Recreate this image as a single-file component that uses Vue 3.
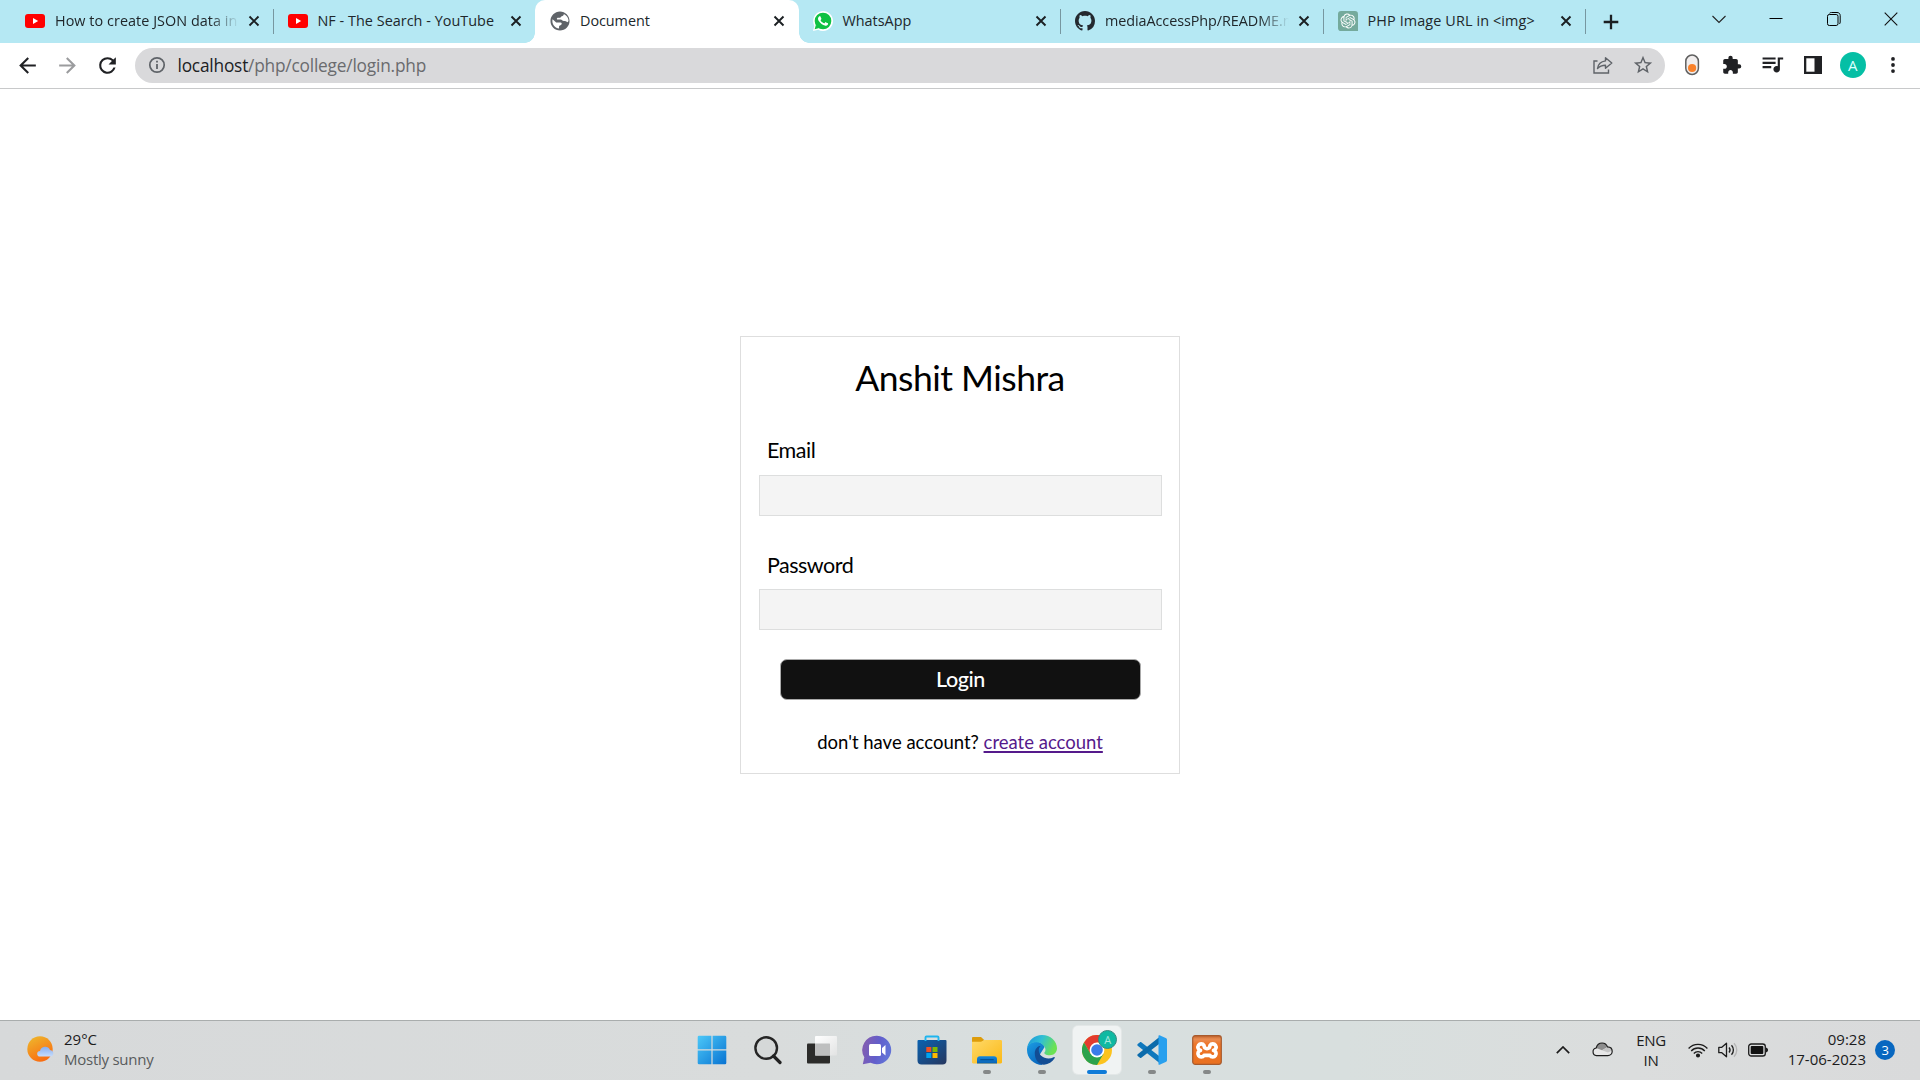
<script setup>
const tabs = [
  { icon: 'youtube', title: 'How to create JSON data in', sp: '0.05px', fade: true },
  { icon: 'youtube', title: 'NF - The Search - YouTube', sp: '0.03px' },
  { icon: 'globe', title: 'Document', active: true, sp: '-0.05px' },
  { icon: 'whatsapp', title: 'WhatsApp', sp: '0px' },
  { icon: 'github', title: 'mediaAccessPhp/README.m', sp: '-0.07px', fade: true },
  { icon: 'openai', title: 'PHP Image URL in <img>', sp: '0.12px' },
]
</script>

<template>
  <div class="screen">
    <header class="strip">
      <div v-for="(t, i) in tabs" :key="i" class="tab" :class="{ active: t.active, sep: i !== 1 && i !== 2 }">
        <svg v-if="t.icon === 'youtube'" class="fav" viewBox="0 0 20 20">
          <rect x="0" y="3" width="20" height="14" rx="3" fill="#f00" />
          <path d="M8 7v6l5.2-3z" fill="#fff" />
        </svg>
        <svg v-else-if="t.icon === 'globe'" class="fav" viewBox="1.5 1.5 21 21">
          <path fill="#5f6368" d="M12 2C6.48 2 2 6.48 2 12s4.48 10 10 10 10-4.48 10-10S17.52 2 12 2zm-1 17.93c-3.95-.49-7-3.85-7-7.93 0-.62.08-1.21.21-1.79L8 13.5h4.5c1.5 0 1.7 1.6.8 2.4-.9.8-2.300.6-2.300 2zM19.900 13.400c-1-.9-2.500-1.400-3.900-1.400-1.700 0-1.800-1.500-3.300-1.500H9.500c-1.100 0-1.100-1.700 0-2h2.500c1.100 0 .8-1.500 2-1.500 1 0 2-.9 2-2v-.41c2.930 1.190 5 4.060 5 7.410z" />
        </svg>
        <svg v-else-if="t.icon === 'whatsapp'" class="fav" viewBox="0 0 24 24">
          <path fill="#fff" d="M0 24l1.700-6.200A11.900 11.900 0 1 1 6.300 22.400z" />
          <circle cx="12" cy="12" r="10" fill="#0fc143" />
          <path fill="#0fc143" d="M2 22l1.500-5.500 4 4z" />
          <path fill="#fff" d="M17.470 14.380c-.3-.15-1.760-.87-2.030-.97-.27-.1-.47-.15-.67.15-.2.3-.77.97-.94 1.160-.17.2-.35.22-.64.080-.3-.15-1.260-.46-2.390-1.480-.88-.79-1.480-1.760-1.650-2.060-.17-.3-.02-.46.13-.6.13-.14.3-.35.45-.52.15-.18.2-.3.3-.5.1-.2.050-.37-.03-.52-.07-.15-.67-1.610-.92-2.210-.24-.58-.49-.5-.67-.51h-.57c-.2 0-.52.070-.79.370-.27.3-1.040 1.020-1.040 2.480s1.070 2.880 1.210 3.070c.15.2 2.100 3.200 5.080 4.490 2.500 1.080 3 .8 3.550.75.550-.050 1.760-.72 2-1.410.25-.7.25-1.290.18-1.420-.070-.12-.270-.2-.570-.350z" />
        </svg>
        <svg v-else-if="t.icon === 'github'" class="fav" viewBox="0 0 16 16">
          <path fill="#24292f" d="M8 0C3.580 0 0 3.580 0 8c0 3.540 2.290 6.530 5.470 7.590.4.070.55-.17.55-.38 0-.19-.01-.82-.01-1.490-2.010.37-2.530-.49-2.690-.94-.09-.23-.48-.94-.82-1.130-.28-.15-.68-.52-.01-.53.63-.01 1.080.58 1.230.82.72 1.210 1.870.87 2.330.66.070-.52.28-.87.51-1.070-1.780-.2-3.640-.89-3.640-3.950 0-.87.31-1.590.82-2.150-.08-.2-.36-1.020.08-2.120 0 0 .67-.21 2.200.82.64-.18 1.320-.27 2-.27s1.360.09 2 .27c1.530-1.040 2.200-.82 2.200-.82.44 1.100.16 1.920.08 2.120.51.56.82 1.270.82 2.150 0 3.070-1.870 3.750-3.650 3.950.29.25.54.73.54 1.480 0 1.070-.01 1.930-.01 2.200 0 .21.15.46.55.38A8.010 8.010 0 0 0 16 8c0-4.420-3.580-8-8-8z" />
        </svg>
        <svg v-else class="fav" viewBox="0 0 32 32">
          <path d="M5 0h22a5 5 0 0 1 5 5v27H5a5 5 0 0 1-5-5V5a5 5 0 0 1 5-5z" fill="#74aa9c" />
          <path transform="translate(4 4)" fill="#fff" d="M22.2819 9.8211a5.9847 5.9847 0 0 0-.5157-4.9108 6.0462 6.0462 0 0 0-6.5098-2.9A6.0651 6.0651 0 0 0 4.9807 4.1818a5.9847 5.9847 0 0 0-3.9977 2.9 6.0462 6.0462 0 0 0 .7427 7.0966 5.98 5.98 0 0 0 .511 4.9107 6.051 6.051 0 0 0 6.5146 2.9001A5.9847 5.9847 0 0 0 13.2599 24a6.0557 6.0557 0 0 0 5.7718-4.2058 5.9894 5.9894 0 0 0 3.9977-2.9001 6.0557 6.0557 0 0 0-.7475-7.0729zm-9.022 12.6081a4.4755 4.4755 0 0 1-2.8764-1.0408l.1419-.0804 4.7783-2.7582a.7948.7948 0 0 0 .3927-.6813v-6.7369l2.02 1.1686a.071.071 0 0 1 .038.052v5.5826a4.504 4.504 0 0 1-4.4945 4.4944zm-9.6607-4.1254a4.4708 4.4708 0 0 1-.5346-3.0137l.142.0852 4.783 2.7582a.7712.7712 0 0 0 .7806 0l5.8428-3.3685v2.3324a.0804.0804 0 0 1-.0332.0615L9.74 19.9502a4.4992 4.4992 0 0 1-6.1408-1.6464zM2.3408 7.8956a4.485 4.485 0 0 1 2.3655-1.9728V11.6a.7664.7664 0 0 0 .3879.6765l5.8144 3.3543-2.0201 1.1685a.0757.0757 0 0 1-.071 0l-4.8303-2.7865A4.504 4.504 0 0 1 2.3408 7.872zm16.5963 3.8558L13.1038 8.364 15.1192 7.2a.0757.0757 0 0 1 .071 0l4.8303 2.7913a4.4944 4.4944 0 0 1-.6765 8.1042v-5.6772a.79.79 0 0 0-.407-.667zm2.0107-3.0231l-.142-.0852-4.7735-2.7818a.7759.7759 0 0 0-.7854 0L9.409 9.2297V6.8974a.0662.0662 0 0 1 .0284-.0615l4.8303-2.7866a4.4992 4.4992 0 0 1 6.6802 4.66zM8.3065 12.863l-2.02-1.1638a.0804.0804 0 0 1-.038-.0567V6.0742a4.4992 4.4992 0 0 1 7.3757-3.4537l-.142.0805L8.704 5.459a.7948.7948 0 0 0-.3927.6813zm1.0976-2.3654l2.602-1.4998 2.6069 1.4998v2.9994l-2.5974 1.4997-2.6067-1.4997Z" />
        </svg>
        <span class="title" :class="{ fade: t.fade }" :style="{ letterSpacing: t.sp }">{{ t.title }}</span>
        <svg class="close" viewBox="0 0 12 12"><path d="M1.500 1.500l9 9M10.500 1.500l-9 9" stroke="#1b1f22" stroke-width="1.900" /></svg>
      </div>
      <svg class="plus" viewBox="0 0 16 16"><path d="M8 .7v14.600M.7 8h14.600" stroke="#1b1f22" stroke-width="2.300" /></svg>
      <div class="winctl">
        <svg viewBox="0 0 14 14"><path d="M.5 4L7 10.500 13.500 4" fill="none" stroke="#222" stroke-width="1.100" /></svg>
        <svg viewBox="0 0 14 14"><path d="M.5 6.500h13" stroke="#000" /></svg>
        <svg viewBox="0 0 14 14"><rect x=".5" y="2.500" width="10.500" height="11" rx="1.800" fill="none" stroke="#000" /><path d="M2.500 1.300C3 .7 3.500.5 4.500.5H10c2 0 3.200 1.200 3.200 3.200V10c0 1-.3 1.500-.9 2" fill="none" stroke="#000" /></svg>
        <svg viewBox="0 0 14 14"><path d="M.7.7l12.600 12.600M13.300.7L.7 13.300" stroke="#111" stroke-width="1.100" /></svg>
      </div>
    </header>

    <div class="toolbar">
      <div class="nav">
        <svg viewBox="0 0 24 24" fill="#202124"><path d="M20 11H7.830l5.590-5.590L12 4l-8 8 8 8 1.410-1.410L7.830 13H20v-2z" /></svg>
        <svg viewBox="0 0 24 24" fill="#9b9c9e"><path d="M12 4l-1.410 1.410L16.170 11H4v2h12.170l-5.580 5.590L12 20l8-8z" /></svg>
        <svg viewBox="0 0 24 24" fill="#202124"><path d="M17.650 6.350A7.960 7.960 0 0 0 12 4a8 8 0 1 0 7.730 10h-2.080A6 6 0 1 1 12 6c1.660 0 3.140.69 4.220 1.780L13 11h7V4l-2.350 2.350z" /></svg>
      </div>
      <div class="omni">
        <svg class="info" viewBox="0 0 18 18"><circle cx="9" cy="9" r="7.200" fill="none" stroke="#5f6368" stroke-width="1.700" /><path d="M9 8v5M9 4.800v1.800" stroke="#5f6368" stroke-width="1.800" /></svg>
        <span class="url"><b>localhost</b>/php/college/login.php</span>
        <svg class="share" viewBox="0 0 20 18" fill="none" stroke="#5f6368" stroke-width="1.400"><path d="M4.500 5H1v12h14.500v-3.500" /><path d="M12.500 1.800L18.800 7l-6.300 5.200V9.200c-3.800 0-6 1-8 3.300.6-4.300 3.300-7 8-7.600z" stroke-linejoin="round" /></svg>
        <svg class="star" viewBox="0 0 24 24" fill="#5f6368"><path d="M22 9.240l-7.190-.62L12 2 9.190 8.630 2 9.240l5.460 4.730L5.820 21 12 17.270 18.180 21l-1.630-7.030L22 9.240zM12 15.400l-3.760 2.270 1-4.280-3.320-2.880 4.380-.38L12 6.100l1.710 4.040 4.380.38-3.320 2.880 1 4.280L12 15.400z" /></svg>
      </div>
      <div class="ext">
        <svg viewBox="0 0 26 26"><rect x="6.800" y="3" width="12.600" height="19.500" rx="6.300" fill="#f1eeee" stroke="#606060" stroke-width="1.500" /><circle cx="13.100" cy="16" r="4.100" fill="#f9812a" /></svg>
        <svg viewBox="0 0 26 26" fill="#202124"><path d="M20.500 11H19V7c0-1.100-.9-2-2-2h-4V3.500a2.500 2.500 0 0 0-5 0V5H4c-1.100 0-1.990.9-1.990 2v3.800H3.500c1.490 0 2.700 1.210 2.700 2.700s-1.210 2.700-2.700 2.700H2V20c0 1.100.9 2 2 2h3.800v-1.500c0-1.490 1.210-2.700 2.700-2.700s2.700 1.210 2.700 2.700V22H17c1.100 0 2-.9 2-2v-4h1.500a2.500 2.500 0 0 0 0-5z" transform="translate(2.500 2.800) scale(.86)" /></svg>
        <svg viewBox="0 0 24 24" fill="#202124"><path transform="translate(.3 -1)" d="M15 6H3v2h12V6zm0 4H3v2h12v-2zM3 16h8v-2H3v2zM17 6v8.180c-.31-.11-.65-.18-1-.18-1.660 0-3 1.340-3 3s1.340 3 3 3 3-1.340 3-3V8h3V6h-5z" /></svg>
        <svg viewBox="0 0 26 26"><path d="M4 4h18v18H4z" fill="#202124" /><path d="M6.300 6.300h8.200v13.400H6.300z" fill="#fff" /></svg>
        <div class="avatar">A</div>
        <svg viewBox="0 0 26 26" fill="#202124"><circle cx="13" cy="6.900" r="1.900" /><circle cx="13" cy="13" r="1.900" /><circle cx="13" cy="19.100" r="1.900" /></svg>
      </div>
    </div>

    <main class="page">
      <form class="card" @submit.prevent>
        <h1>Anshit Mishra</h1>
        <label class="lemail">Email</label>
        <input type="text" aria-label="Email" />
        <label class="lpass">Password</label>
        <input type="password" aria-label="Password" />
        <button>Login</button>
        <p>don't have account? <a href="#">create account</a></p>
      </form>
    </main>

    <footer class="taskbar">
      <div class="weather">
        <svg viewBox="0 0 28 27">
          <defs>
            <linearGradient id="sun" x1=".2" y1="0" x2=".7" y2="1"><stop offset="0" stop-color="#eeb52c" /><stop offset="1" stop-color="#fa6810" /></linearGradient>
            <linearGradient id="cl" x1="0" y1="0" x2="0" y2="1"><stop offset="0" stop-color="#87aef0" /><stop offset="1" stop-color="#c7dcfb" /></linearGradient>
          </defs>
          <circle cx="13" cy="13" r="12.700" fill="url(#sun)" />
          <path d="M13 20.500a2.800 2.800 0 0 1 0-5.600 5.300 5.300 0 0 1 10-1 3.500 3.500 0 0 1 1.500 6.600z" fill="url(#cl)" />
        </svg>
        <div class="wtext"><span>29°C</span><span class="dim">Mostly sunny</span></div>
      </div>

      <div class="apps">
        <div class="app">
          <svg viewBox="0 0 30 30">
            <defs><linearGradient id="win" x1="0" y1="0" x2="1" y2="1" gradientUnits="objectBoundingBox"><stop offset="0" stop-color="#4cc8f8" /><stop offset="1" stop-color="#0873d2" /></linearGradient></defs>
            <path d="M2 .7h12.400v13.600H.7V2A1.300 1.300 0 0 1 2 .7zM15.600.7H28a1.300 1.300 0 0 1 1.300 1.300v12.300H15.600zM.7 15.500h13.700v13.800H2A1.300 1.300 0 0 1 .7 28zM15.600 15.500h13.700V28a1.300 1.300 0 0 1-1.300 1.300H15.600z" fill="url(#win)" />
          </svg>
        </div>
        <div class="app">
          <svg viewBox="0 0 30 30"><circle cx="14.200" cy="13" r="10.800" fill="#d5d8d8" stroke="#252525" stroke-width="2.400" /><path d="M21.500 21l6.500 6.500" stroke="#222" stroke-width="3.200" stroke-linecap="round" /></svg>
        </div>
        <div class="app">
          <svg viewBox="0 0 30 30">
            <defs><linearGradient id="tv" x1="0" y1="0" x2="1" y2="1"><stop offset="0" stop-color="#fff" /><stop offset="1" stop-color="#e2e3e3" /></linearGradient></defs>
            <rect x="0" y="8.500" width="23" height="20" rx="1" fill="#2c2c2a" />
            <rect x="8" y="1" width="22" height="19.500" rx="1" fill="url(#tv)" />
            <path d="M8 8.500h14.500a.5.500 0 0 1 .5.500v11.500H8z" fill="#bebfbf" />
          </svg>
        </div>
        <div class="app">
          <svg viewBox="0 0 30 30">
            <defs><linearGradient id="chat" x1=".1" y1=".3" x2=".9" y2=".5"><stop offset="0" stop-color="#7f5db4" /><stop offset=".55" stop-color="#625ecb" /><stop offset="1" stop-color="#6272d6" /></linearGradient></defs>
            <path d="M15 .7A14.300 14.300 0 1 1 8.500 27.800L.8 29.300l1.500-7A14.300 14.300 0 0 1 15 .7z" fill="url(#chat)" />
            <rect x="7" y="9" width="12" height="12" rx="1.500" fill="#fff" /><path d="M20 13l3.500-3v10.500l-3.500-3z" fill="#fff" />
          </svg>
        </div>
        <div class="app">
          <svg viewBox="0 0 30 30">
            <defs><linearGradient id="st" x1="0" y1="0" x2="1" y2="1"><stop offset="0" stop-color="#0a62b0" /><stop offset="1" stop-color="#26375f" /></linearGradient></defs>
            <path d="M1.500 5h27a1 1 0 0 1 1 1v19.500a4 4 0 0 1-4 4h-21a4 4 0 0 1-4-4V6a1 1 0 0 1 1-1z" fill="url(#st)" />
            <path d="M8.500 6V2.500c0-.6.4-1 1-1h11c.6 0 1 .4 1 1V6" fill="none" stroke="#1fb5ef" stroke-width="1.900" />
            <path d="M9.300 12h5v5h-5z" fill="#f25022" /><path d="M15.500 12h5v5h-5z" fill="#7fba00" /><path d="M9.300 18h5v5h-5z" fill="#00a4ef" /><path d="M15.500 18h5v5h-5z" fill="#ffb900" />
          </svg>
        </div>
        <div class="app open">
          <svg viewBox="0 0 30 30">
            <defs>
              <linearGradient id="fo" x1="0" y1="0" x2="1" y2="1"><stop offset="0" stop-color="#ffd968" /><stop offset="1" stop-color="#fbb917" /></linearGradient>
              <linearGradient id="fb" x1="0" y1="0" x2="0" y2="1"><stop offset="0" stop-color="#1587dc" /><stop offset="1" stop-color="#0a62b3" /></linearGradient>
            </defs>
            <path d="M0 3.300c0-.7.500-1.200 1.200-1.200H9l3.200 2.900-3 3H0z" fill="#dd9c0b" />
            <path d="M0 6.800h9L12.500 5h16.200c.8 0 1.300.6 1.300 1.300v21c0 .6-.5 1.200-1.200 1.200H1.200C.5 28.500 0 27.900 0 27.300z" fill="url(#fo)" />
            <path d="M5 28.500v-4.200c0-1.800 1.200-3 3-3h14c1.800 0 3 1.200 3 3v4.200z" fill="url(#fb)" /><path d="M8.300 24.700h13.400" stroke="#054f91" stroke-width="1.100" />
          </svg>
        </div>
        <div class="app open">
          <svg viewBox="0 0 30 30">
            <defs>
              <linearGradient id="e1" x1="0" y1="0" x2="1" y2=".35"><stop offset="0" stop-color="#1b93dc" /><stop offset=".5" stop-color="#30bfd4" /><stop offset="1" stop-color="#6be253" /></linearGradient>
              <linearGradient id="e2" x1="0" y1="0" x2=".6" y2="1"><stop offset="0" stop-color="#1c9ee4" /><stop offset="1" stop-color="#0966bd" /></linearGradient>
            </defs>
            <path d="M.2 12.500C1.500 9 5 6.800 9 6.800c4 0 7.500 2 8.600 5.200L10 24l5.500 6C6.500 30 0 23 0 15c0-.9 0-1.700.2-2.500z" fill="url(#e2)" />
            <path d="M12.500 11C9 12.300 7.800 15.500 7.800 18.500c0 6.300 4.200 11 9.200 11.300 4.500-.5 8.300-2.800 10.600-6.500.5-.8-.2-1.500-1-1.100-1.600.8-3.200 1.200-5.100 1.200-5.500 0-9.700-3.800-9.700-8 0-1.800.5-3.300 1.800-4.200z" fill="#124d94" />
            <path d="M.2 12.500C1.500 5 7.500 0 15 0c8.500 0 15 6 15 13.300 0 4.200-3 7-7.200 7-4.200 0-5.900-1.600-5.400-2.700 1.700-1.600 1.400-4.700-.6-6.900C12.500 5.500 3.500 6.500.2 12.500z" fill="url(#e1)" />
          </svg>
        </div>
        <div class="app open current">
          <svg viewBox="0 0 30 30">
            <circle cx="15" cy="15" r="15" fill="#fcc31e" />
            <path d="M2 7.500A15 15 0 0 1 28 7.500H15L8.500 18.750z" fill="#e33b2e" />
            <path d="M2 7.500A15 15 0 0 0 15 30l6.500-11.250H8.500z" fill="#2ba24c" />
            <circle cx="15" cy="15" r="7.400" fill="#fff" /><circle cx="15" cy="15" r="5.800" fill="#3a7be8" />
          </svg>
          <span class="mini">A</span>
        </div>
        <div class="app open">
          <svg viewBox="0 0 30 30">
            <path d="M1 8.700L3 7.300c.4-.3.900-.3 1.300 0L24 22.500v6.800L1 11c-.9-.7-.9-1.500 0-2.300z" fill="#0f78bd" />
            <path d="M1 21.300L3 22.700c.4.300.9.300 1.300 0L24 7.500V.7L1 19c-.9.700-.9 1.500 0 2.300z" fill="#0b6bab" />
            <path d="M22.500.3L28.700 3c.8.400 1.300 1.100 1.300 2v20c0 .9-.5 1.600-1.300 2l-6.200 2.700c-.7.300-1 .1-1-.7V1c0-.8.300-1 1-.7z" fill="#29a0ee" />
          </svg>
        </div>
        <div class="app open">
          <svg viewBox="0 0 30 30">
            <defs><linearGradient id="xa" x1="0" y1="0" x2="0" y2="1"><stop offset="0" stop-color="#c1622b" /><stop offset=".12" stop-color="#e98c52" /><stop offset=".3" stop-color="#ee762a" /><stop offset="1" stop-color="#e9701f" /></linearGradient></defs>
            <rect x=".7" y=".7" width="28.600" height="28.600" rx="2.500" fill="url(#xa)" stroke="#a75a2d" stroke-width="1.200" />
            <path d="M12 10.200a3.300 3.300 0 1 0-3.500 5 3.300 3.300 0 1 0 3.500 5h6a3.300 3.300 0 1 0 3.500-5 3.300 3.300 0 1 0-3.500-5c-.3 2.500-1 3.300-3 3.300s-2.700-.8-3-3.300z" transform="translate(0 .2)" fill="none" stroke="#fff" stroke-width="3.700" stroke-linejoin="round" />
          </svg>
        </div>
      </div>

      <div class="tray">
        <svg class="chev" viewBox="0 0 14 8"><path d="M.8 7.200L7 1l6.200 6.200" fill="none" stroke="#1c1c1c" stroke-width="1.700" /></svg>
        <svg class="cloud" viewBox="0 0 21 15"><path d="M4.500 13.700a3.900 3.900 0 0 1-.3-7.700C5 2.800 7.300 1 10.100 1c2.600 0 4.500 1.400 5.400 3.900 2.800.1 4.700 2 4.700 4.400s-1.900 4.400-4.400 4.400z" fill="#e7e7e7" /><path d="M4.200 6C5 2.800 7.300 1 10.100 1c2.600 0 4.500 1.400 5.400 3.900L10 8.300z" fill="#8d8d8d" /><path d="M10 8.300l5.500-3.400c2.500.1 4.200 1.700 4.600 3.700L16 10.500z" fill="#c5c5c5" /><path d="M4.500 13.700a3.900 3.900 0 0 1-.3-7.700C5 2.800 7.300 1 10.100 1c2.600 0 4.500 1.400 5.400 3.900 2.800.1 4.700 2 4.700 4.400s-1.900 4.400-4.400 4.400z" fill="none" stroke="#1d1d1d" stroke-width="1.200" /></svg>
        <div class="lang"><span>ENG</span><span>IN</span></div>
        <svg class="wifi" viewBox="0 0 20 16" fill="none" stroke="#1c1c1c" stroke-width="1.300"><path d="M.6 6.500a12.700 12.700 0 0 1 18.800 0M3.200 9a9.200 9.200 0 0 1 13.600 0M5.800 11.500a5.700 5.700 0 0 1 8.400 0" /><circle cx="10" cy="13.500" r="1.400" fill="#1c1c1c" /></svg>
        <svg class="vol" viewBox="0 0 20 16" fill="none" stroke="#1c1c1c" stroke-width="1.300"><path d="M.8 5.300h3L8.500 1.200v13.600l-4.700-4.100h-3z" stroke-linejoin="round" /><path d="M11 5.500c1.300 1.500 1.300 3.500 0 5M13.500 3.200c2.500 2.700 2.500 6.900 0 9.600" /><path d="M16 1.200c3.700 3.900 3.700 9.700 0 13.600" stroke="#b5b5b5" /></svg>
        <svg class="bat" viewBox="0 0 20 14"><rect x=".7" y="1" width="16.600" height="12" rx="2.600" fill="none" stroke="#1c1c1c" stroke-width="1.300" /><rect x="2.700" y="3" width="12.600" height="8" rx="1" fill="#111" /><path d="M18 4.500c1.300.4 2 1.200 2 2.500s-.7 2.100-2 2.500z" fill="#1c1c1c" /></svg>
        <div class="clock"><span>09:28</span><span>17-06-2023</span></div>
        <div class="count">3</div>
      </div>
    </footer>
  </div>
</template>

<style>
body { overflow: hidden; background: #fff; }
</style>

<style scoped>
* { box-sizing: border-box; }
.screen { width: 1920px; height: 1080px; display: flex; flex-direction: column; font-family: "Open Sans", "Noto Sans", sans-serif; background: #fff; }
svg { display: block; flex: none; }

.strip { height: 43px; background: #b5e8f3; display: flex; align-items: center; padding-left: 11px; flex: none; }
.tab { width: 262.500px; height: 43px; position: relative; display: flex; align-items: center; padding: 0 14px 1px 14px; flex: none; }
.tab.sep { background: linear-gradient(#7797a0, #7797a0) no-repeat right 0 top 9px / 1px 25px; }
.tab.active { background: #fff; border-radius: 10px 10px 0 0; margin-left: -1px; width: 263.500px; padding-left: 15px; }
.tab.active::before, .tab.active::after { content: ""; position: absolute; bottom: 0; width: 10px; height: 10px; }
.tab.active::before { left: -10px; background: radial-gradient(circle at 0 0, transparent 9.5px, #fff 10px); }
.tab.active::after { right: -10px; background: radial-gradient(circle at 100% 0, transparent 9.5px, #fff 10px); }
.fav { width: 20px; height: 20px; }
.title { width: 186px; margin-left: 10px; font-size: 14.4px; line-height: 20px; color: #20272b; white-space: nowrap; }
.title.fade { -webkit-mask-image: linear-gradient(90deg, #000 155px, transparent 184px); mask-image: linear-gradient(90deg, #000 155px, transparent 184px); }
.close { width: 12px; height: 12px; margin-left: 7px; }
.plus { width: 16px; height: 16px; margin-left: 17px; }
.winctl { margin-left: auto; margin-right: 22px; display: flex; gap: 43.500px; align-self: flex-start; padding-top: 12px; }
.winctl svg { width: 14px; height: 14px; }

.toolbar { height: 46px; flex: none; border-bottom: 1px solid #c8c9ca; display: flex; align-items: center; padding: 0 0 1px 15px; }
.nav { display: flex; gap: 15px; width: 120px; }
.nav svg { width: 25px; height: 25px; }
.omni { width: 1530px; height: 35px; border-radius: 18px; background: #d9d9db; display: flex; align-items: center; padding: 0 11px 0 13px; }
.info { width: 18px; height: 18px; }
.url { margin-left: 11.500px; padding-top: 2px; font-size: 17.3px; letter-spacing: -0.2px; line-height: 24px; color: #6a6b6e; flex: 1; white-space: nowrap; }
.url b { font-weight: 400; color: #202124; }
.share { width: 20px; height: 18px; margin-right: 19px; }
.star { width: 22px; height: 22px; }
.ext { display: flex; gap: 14.200px; margin-left: 14px; align-items: center; }
.ext svg { width: 26px; height: 26px; }
.avatar { width: 26px; height: 26px; border-radius: 50%; background: #05bfa5; color: #dff; font: 400 15px/26px "Open Sans", sans-serif; text-align: center; }

.page { flex: 1; display: flex; justify-content: center; align-items: flex-start; padding-top: 247px; font-family: Lato, "Open Sans", sans-serif; color: #000; }
.card { width: 440px; height: 438px; border: 1px solid #dedede; padding: 0 18px; display: flex; flex-direction: column; }
h1 { margin: 19px 0 0; font-weight: 400; font-size: 35.500px; line-height: 44px; text-align: center; letter-spacing: -0.5px; }
label { font-size: 21.500px; line-height: 26px; padding-left: 8px; letter-spacing: -0.5px; }
.lemail { margin-top: 37px; }
.lpass { margin-top: 36px; }
input { margin: 12px 0 0; width: 403px; height: 41px; border: 1px solid #dddede; background: #f4f4f4; padding: 0; outline: none; }
.lpass + input { margin-top: 11px; }
button { margin: 29px 0 0 21px; width: 361px; height: 41px; border: 1px solid #aaa; border-radius: 7px; background: #111; color: #fff; font: 500 21.500px/36px Lato, sans-serif; padding: 0 0 2px; letter-spacing: -0.4px; }
p { margin: 28px 0 0; text-align: center; font-size: 18.500px; line-height: 28px; white-space: nowrap; }
a { color: #551a8b; text-underline-offset: 2px; text-decoration-thickness: 2px; }

.taskbar { height: 60px; flex: none; border-top: 1px solid #a9adad; background: linear-gradient(90deg, #d7d9da 0%, #d9dcdc 40%, #d8dfdf 55%, #d8dfde 70%, #dbdddd 85%, #d9dadb 100%); display: grid; grid-template-columns: 684px 552px 1fr; color: #1c1c1c; font-size: 15px; line-height: 20px; }
.weather { display: flex; padding: 14px 0 0 27px; align-items: flex-start; }
.weather svg { width: 28px; height: 27px; margin-top: 1px; }
.wtext { display: flex; flex-direction: column; margin: -6px 0 0 9px; }
.wtext .dim { color: #585b5c; letter-spacing: -0.25px; }
.apps { display: flex; gap: 7.100px; padding: 5px 0 0 3.500px; }
.app { width: 48px; height: 48px; position: relative; padding: 9px; border-radius: 5px; }
.app svg { width: 30px; height: 30px; }
.open::after { content: ""; position: absolute; left: 20px; bottom: 0; width: 8px; height: 4px; border-radius: 2px; background: #858888; }
.current { background: #f0f3f3; box-shadow: 0 0 0 1px #e3e7e7; }
.current::after { left: 14px; width: 20px; background: #0f7bd8; }
.mini { position: absolute; left: 25px; top: 4px; width: 19px; height: 19px; border-radius: 50%; background: #0fb9a2; border: 1px solid #38887f; color: #a6e9df; font-size: 11px; line-height: 17px; text-align: center; }
.tray { display: flex; align-items: flex-start; justify-content: flex-end; padding: 8px 25px 0 0; letter-spacing: -0.3px; }
.chev { width: 14px; height: 8px; margin: 17px 22px 0 0; }
.cloud { width: 21px; height: 15px; margin: 13px 23px 0 0; }
.lang { width: 30px; display: flex; flex-direction: column; align-items: center; margin: 1px 22px 0 0; }
.wifi { width: 20px; height: 16px; margin: 13px 10px 0 0; }
.vol { width: 20px; height: 16px; margin: 13px 10px 0 0; }
.bat { width: 20px; height: 14px; margin: 14px 0 0 0; }
.clock { width: 98px; display: flex; flex-direction: column; align-items: flex-end; letter-spacing: 0; }
.count { width: 20px; height: 20px; border-radius: 50%; background: #0867c0; color: #fff; margin: 11px 0 0 9px; font-size: 13px; line-height: 20px; text-align: center; }
</style>
